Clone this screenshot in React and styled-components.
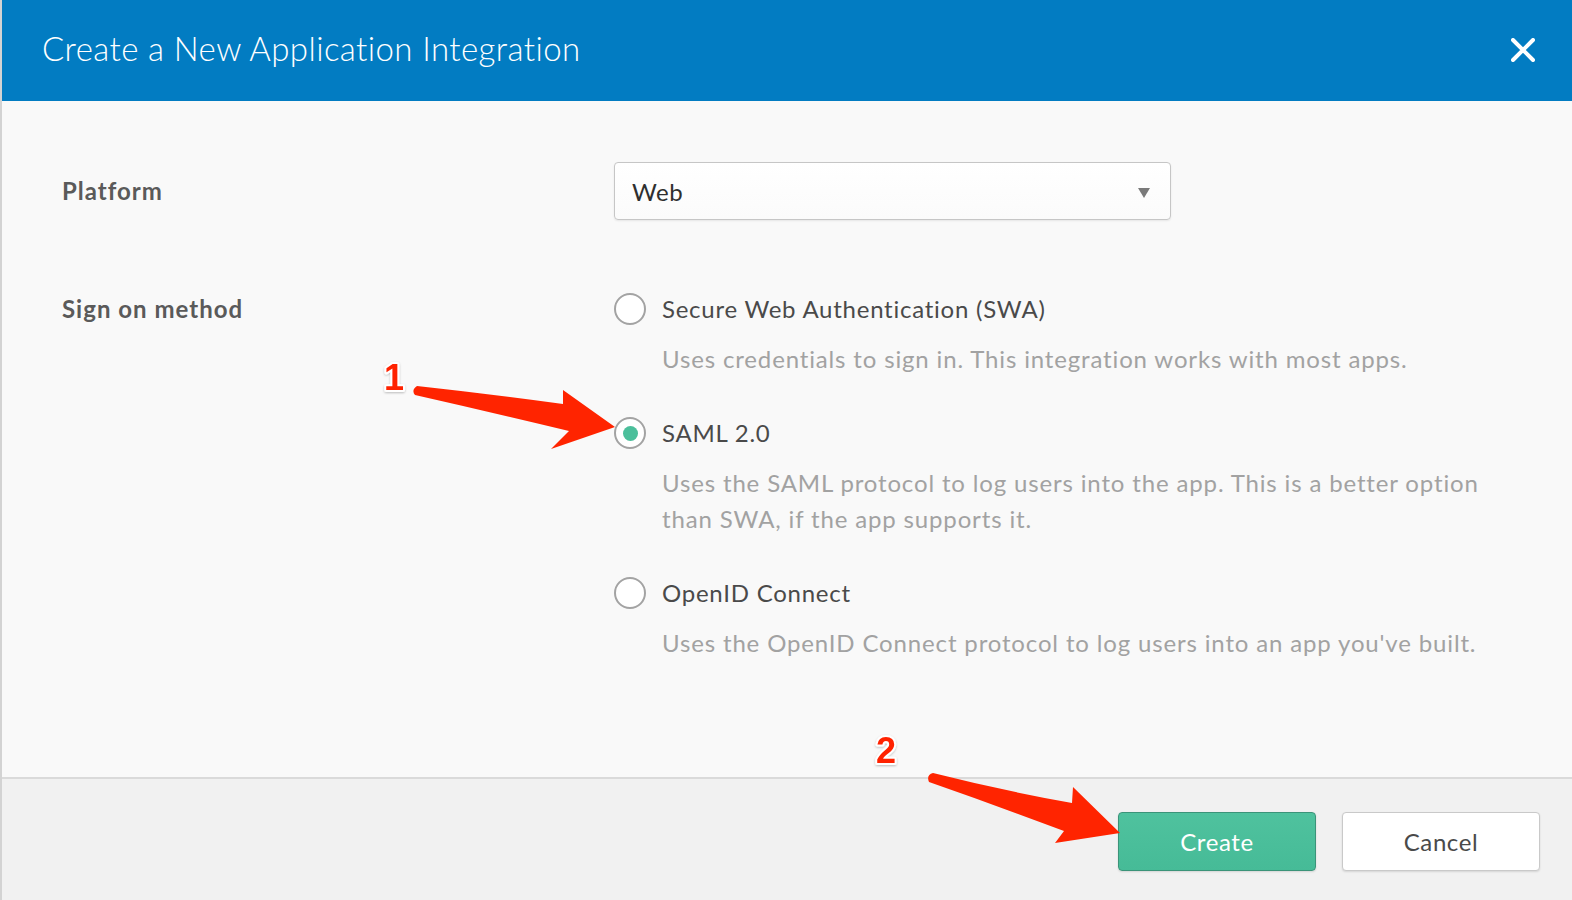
import React from "react";
import styled, { createGlobalStyle } from "styled-components";

const Global = createGlobalStyle`
  html, body { margin: 0; padding: 0; background: #f9f9f9; }
  body { font-family: Lato, "Open Sans", "Liberation Sans", sans-serif; }
  * { box-sizing: border-box; }
`;

const Dialog = styled.div`
  position: relative;
  width: 1572px;
  height: 900px;
  display: flex;
  flex-direction: column;
  border-left: 2px solid #d3d3d3;
  background: #f9f9f9;
  overflow: hidden;
`;

const Header = styled.header`
  height: 101px;
  flex: none;
  background: #027cc2;
  display: flex;
  align-items: center;
  justify-content: space-between;
  padding: 0 37px 2px 40px;
`;

const Title = styled.h1`
  margin: 0 0 4px 0;
  font-family: Lato, "Open Sans", sans-serif;
  font-weight: 300;
  font-size: 33px;
  color: #ffffff;
  letter-spacing: 0.4px;
`;

const CloseButton = styled.button`
  width: 24px;
  height: 24px;
  padding: 0;
  border: 0;
  background: transparent;
  display: flex;
  cursor: pointer;
`;

const Body = styled.main`
  flex: 1;
  padding: 61px 0 0 60px;
  display: flex;
  flex-direction: column;
  gap: 71px;
`;

const FormRow = styled.div`
  display: grid;
  grid-template-columns: 552px 1fr;
  align-items: ${(p) => (p.$top ? "start" : "center")};
`;

const Label = styled.label`
  font-family: Lato, "Open Sans", sans-serif;
  font-weight: 700;
  font-size: 24px;
  line-height: 36px;
  letter-spacing: 1px;
  color: #5a5a5a;
`;

const Select = styled.div`
  width: 557px;
  height: 58px;
  background: linear-gradient(#ffffff, #fbfbfb);
  border: 1px solid #c6c6c6;
  border-radius: 4px;
  box-shadow: 0 1px 2px rgba(0, 0, 0, 0.08);
  display: flex;
  align-items: center;
  justify-content: space-between;
  padding: 0 20px 0 17px;
  font-size: 24px;
  letter-spacing: 0.6px;
  color: #2f2f2f;
`;

const Caret = styled.span`
  width: 0;
  height: 0;
  border-left: 6px solid transparent;
  border-right: 6px solid transparent;
  border-top: 10px solid #7a7a7a;
  margin-top: 3px;
`;

const Options = styled.div`
  display: flex;
  flex-direction: column;
  gap: 38px;
`;

const Option = styled.div`
  display: grid;
  grid-template-columns: 48px 1fr;
  row-gap: 14px;
`;

const Radio = styled.span`
  width: 32px;
  height: 32px;
  border-radius: 50%;
  border: 2px solid #a3a3a3;
  background: #ffffff;
  align-self: center;
  display: flex;
  align-items: center;
  justify-content: center;
  &::after {
    content: "";
    width: 15px;
    height: 15px;
    border-radius: 50%;
    background: ${(p) => (p.$checked ? "#4bbf9b" : "transparent")};
  }
`;

const OptionTitle = styled.span`
  font-size: 24px;
  line-height: 36px;
  letter-spacing: 0.75px;
  color: #4a4a4a;
`;

const OptionDesc = styled.p`
  grid-column: 2;
  margin: 0;
  max-width: 840px;
  font-size: 24px;
  line-height: 36px;
  letter-spacing: 0.85px;
  color: #a2a2a2;
`;

const Footer = styled.footer`
  height: 123px;
  flex: none;
  border-top: 2px solid #dadada;
  background: #f1f1f1;
  display: flex;
  justify-content: flex-end;
  align-items: flex-start;
  gap: 26px;
  padding: 33px 32px 0 0;
`;

const Button = styled.button`
  width: 198px;
  height: 59px;
  border-radius: 4px;
  font-family: Lato, "Open Sans", sans-serif;
  font-size: 24px;
  letter-spacing: 0.6px;
  cursor: pointer;
  border: 1px solid ${(p) => (p.$primary ? "#3b9479" : "#c9c9c9")};
  background: ${(p) => (p.$primary ? "linear-gradient(#4fc29e, #46bb97)" : "#ffffff")};
  color: ${(p) => (p.$primary ? "#ffffff" : "#4a4a4a")};
  box-shadow: 0 1px 2px rgba(0, 0, 0, 0.12);
`;

const Overlay = styled.svg`
  position: absolute;
  left: -2px;
  top: 0;
  width: 1572px;
  height: 900px;
  pointer-events: none;
`;

const StepNumber = styled.text`
  font-family: "Liberation Sans", Arial, sans-serif;
  font-weight: 700;
  font-size: 36px;
  fill: #ff2200;
  stroke: #ffffff;
  stroke-width: 4px;
  stroke-linejoin: round;
  paint-order: stroke;
`;

const options = [
  {
    title: "Secure Web Authentication (SWA)",
    desc: "Uses credentials to sign in. This integration works with most apps.",
  },
  {
    title: "SAML 2.0",
    desc: "Uses the SAML protocol to log users into the app. This is a better option than SWA, if the app supports it.",
    checked: true,
  },
  {
    title: "OpenID Connect",
    desc: "Uses the OpenID Connect protocol to log users into an app you've built.",
  },
];

export default function App() {
  return (
    <Dialog>
      <Global />
      <Header>
        <Title>Create a New Application Integration</Title>
        <CloseButton aria-label="Close">
          <svg width="24" height="24" viewBox="0 0 24 24">
            <path d="M2 2 L22 22 M22 2 L2 22" stroke="#ffffff" strokeWidth="4" strokeLinecap="round" />
          </svg>
        </CloseButton>
      </Header>
      <Body>
        <FormRow>
          <Label>Platform</Label>
          <Select>
            <span>Web</span>
            <Caret />
          </Select>
        </FormRow>
        <FormRow $top>
          <Label>Sign on method</Label>
          <Options>
            {options.map((o) => (
              <Option key={o.title}>
                <Radio $checked={o.checked} />
                <OptionTitle>{o.title}</OptionTitle>
                <OptionDesc>{o.desc}</OptionDesc>
              </Option>
            ))}
          </Options>
        </FormRow>
      </Body>
      <Footer>
        <Button $primary>Create</Button>
        <Button>Cancel</Button>
      </Footer>
      <Overlay viewBox="0 0 1572 900">
        <defs>
          <filter id="shadow" x="-20%" y="-20%" width="140%" height="140%">
            <feDropShadow dx="0" dy="1" stdDeviation="1" floodColor="#000" floodOpacity="0.25" />
          </filter>
        </defs>
        <path
          d="M417 386 Q490 394 563 404 L563 390 L615 427 L551 449 L569 431 Q490 412 415 395 Q411 390 417 386 Z"
          fill="#ff2400"
        />
        <path
          d="M933 773 Q1000 790 1072 803 L1073 787 L1120 833 L1055 843 L1064 831 Q995 805 929 782 Q926 775 933 773 Z"
          fill="#ff2400"
        />
        <StepNumber x="384" y="390" filter="url(#shadow)">1</StepNumber>
        <StepNumber x="876" y="763" filter="url(#shadow)">2</StepNumber>
      </Overlay>
    </Dialog>
  );
}
